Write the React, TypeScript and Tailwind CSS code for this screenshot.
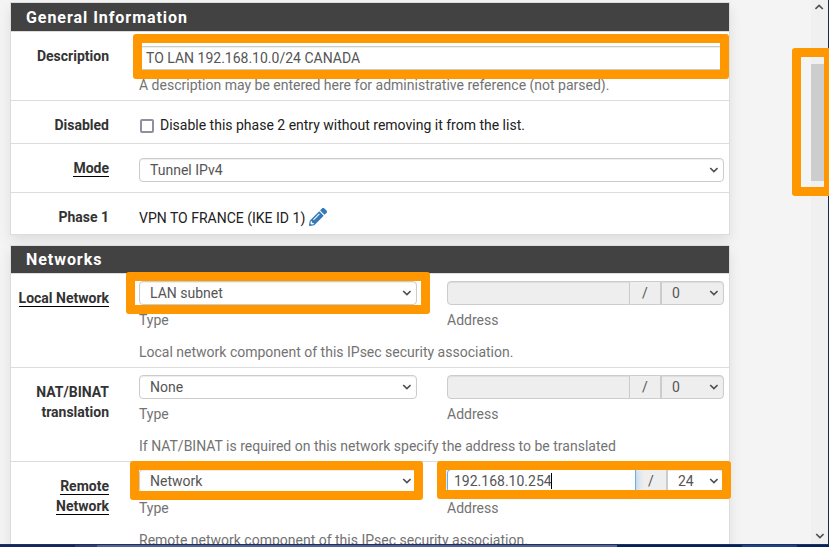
import type { ReactNode } from "react";

function Chevron({ up = false }: { up?: boolean }) {
  return (
    <svg width="9" height="6" viewBox="0 0 9 6" className={up ? "rotate-180" : ""} fill="none" stroke="#505055" strokeWidth="1.7">
      <path d="M1.2 1 L4.9 4.6 L8.6 1" />
    </svg>
  );
}

function Panel({ title, headClass, children }: { title: string; headClass: string; children: ReactNode }) {
  return (
    <section className="w-[720px] border border-[#dcdcdc] bg-white shadow-[0_6px_12px_rgba(0,0,0,0.09)]">
      <h2 className={`flex items-center border-b border-[#dcdcdc] bg-[#424242] bg-clip-padding pl-[15px] text-[16px] font-bold tracking-[0.95px] text-white ${headClass}`}>
        {title}
      </h2>
      {children}
    </section>
  );
}

function Row({ label, underline = false, labelClass, className, children }: { label: string[]; underline?: boolean; labelClass: string; className: string; children: ReactNode }) {
  return (
    <div className={`flex gap-[30px] pr-[5px] ${className}`}>
      <div className={`flex w-[98px] shrink-0 flex-col items-end font-bold text-[#333] ${labelClass}`}>
        {label.map((line) => (
          <span key={line} className="flex h-5 items-start whitespace-nowrap leading-5">
            <span className={underline ? "h-[19px] border-b border-black" : ""}>{line}</span>
          </span>
        ))}
      </div>
      <div className="min-w-0 flex-1">{children}</div>
    </div>
  );
}

function Select({ value, className = "" }: { value: string; className?: string }) {
  return (
    <div className={`flex h-6 items-center justify-between rounded border border-[#ccc] pr-[5px] pl-[10px] text-[#555] shadow-[inset_0_1px_1px_rgba(0,0,0,0.075)] ${className}`}>
      <span>{value}</span>
      <Chevron />
    </div>
  );
}

function Network({ type, note, address = "", mask, active = false }: { type: string; note: string; address?: string; mask: string; active?: boolean }) {
  return (
    <>
      <div className="flex gap-[30px]">
        <div className="w-[278px]">
          <Select value={type} />
          <div className="mt-[5px] leading-5 text-[#737373]">Type</div>
        </div>
        <div className="w-[277px]">
          <div className="flex h-6 text-[#555]">
            <div className={`flex items-center rounded-l border pl-[6px] ${active ? "z-10 w-[189px] border-[#66afe9] bg-white shadow-[0_0_8px_rgba(102,175,233,0.6)]" : "w-[183px] border-[#ccc] bg-[#eee] shadow-[inset_0_1px_1px_rgba(0,0,0,0.075)]"}`}>
              <span>{address}</span>
              {active && <span className="-ml-px h-4 w-px bg-black" />}
            </div>
            <div className="flex w-[31px] items-center justify-center border-y border-r border-[#ccc] bg-[#eee]">/</div>
            <Select value={mask} className={`flex-1 rounded-l-none ${active ? "bg-white" : "bg-[#eee]"}`} />
          </div>
          <div className="mt-[5px] leading-5 text-[#737373]">Address</div>
        </div>
      </div>
      <div className="mt-3 leading-5 text-[#737373]">{note}</div>
    </>
  );
}

function Highlight({ className }: { className: string }) {
  return <div className={`absolute z-20 rounded-[3px] border-[9px] border-[#ff9800] ${className}`} />;
}

export default function App() {
  return (
    <div className="relative flex h-[547px] w-[829px] flex-col overflow-hidden bg-[#f4f4f4] font-['Roboto','Liberation_Sans',sans-serif] text-[14px] text-[#212121]">
      <div className="flex h-[544px] overflow-hidden">
        <main className="flex w-[811px] shrink-0 flex-col gap-[10px] pt-[2px] pl-[10px]">
          <Panel title="General Information" headClass="h-[29px] pt-[2px]">
            <Row label={["Description"]} labelClass="pt-[14px]" className="h-[69px] border-b border-[#dcdcdc]">
              <div className="mt-[14px] flex h-6 items-center rounded border border-[#ccc] pl-[6px] text-[#555] shadow-[inset_0_1px_1px_rgba(0,0,0,0.075)]">TO LAN 192.168.10.0/24 CANADA</div>
              <div className="mt-[5px] leading-5 text-[#737373]">A description may be entered here for administrative reference (not parsed).</div>
            </Row>
            <Row label={["Disabled"]} labelClass="pt-[14px]" className="h-[43px] border-b border-[#dcdcdc]">
              <div className="mt-[14px] flex items-center gap-[6px] pl-px leading-5">
                <span className="mt-px size-[14px] rounded-[2px] border-2 border-[#8f8f9d] bg-white" />
                <span>Disable this phase 2 entry without removing it from the list.</span>
              </div>
            </Row>
            <Row label={["Mode"]} underline labelClass="pt-[14px]" className="h-[49px] border-b border-[#dcdcdc]">
              <Select value="Tunnel IPv4" className="mt-[14px]" />
            </Row>
            <Row label={["Phase 1"]} labelClass="pt-[14px]" className="h-[41px]">
              <div className="mt-[15px] flex h-5 items-center gap-1 leading-5">
                <span>VPN TO FRANCE (IKE ID 1)</span>
                <svg width="18" height="18" viewBox="0 0 512 512" fill="#337ab7" className="-mt-[3px]">
                  <path d="M497.9 142.1l-46.1 46.1c-4.7 4.7-12.3 4.7-17 0l-111-111c-4.7-4.7-4.7-12.3 0-17l46.1-46.1c18.7-18.7 49.1-18.7 67.9 0l60.1 60.1c18.8 18.7 18.8 49.1 0 67.9zM284.2 99.8L21.6 362.4.4 483.9c-2.9 16.4 11.4 30.6 27.8 27.8l121.5-21.3 262.6-262.6c4.7-4.7 4.7-12.3 0-17l-111-111c-4.8-4.7-12.4-4.7-17.1 0zM124.1 339.9c-5.5-5.5-5.5-14.3 0-19.8l154-154c5.5-5.5 14.3-5.5 19.8 0s5.5 14.3 0 19.8l-154 154c-5.5 5.5-14.3 5.5-19.8 0zM88 424h48v36.3l-64.5 11.3-31.1-31.1L51.7 376H88v48z" />
                </svg>
              </div>
            </Row>
          </Panel>
          <Panel title="Networks" headClass="h-[28px]">
            <Row label={["Local Network"]} underline labelClass="pt-[14px]" className="h-[94px] border-b border-[#dcdcdc] pt-[7px] [&>div:first-child]:-mt-[7px]">
              <Network type="LAN subnet" mask="0" note="Local network component of this IPsec security association." />
            </Row>
            <Row label={["NAT/BINAT", "translation"]} labelClass="pt-[14px]" className="h-[94px] border-b border-[#dcdcdc] pt-[7px] [&>div:first-child]:-mt-[7px]">
              <Network type="None" mask="0" note="If NAT/BINAT is required on this network specify the address to be translated" />
            </Row>
            <Row label={["Remote", "Network"]} underline labelClass="pt-[14px]" className="h-[94px] pt-[7px] [&>div:first-child]:-mt-[7px]">
              <Network type="Network" address="192.168.10.254" mask="24" active note="Remote network component of this IPsec security association." />
            </Row>
          </Panel>
        </main>
        <aside className="flex w-[17px] flex-col items-center bg-[#f0f0f0] pt-1 pb-[5px]">
          <Chevron up />
          <div className="mt-[54px] h-[117px] w-full bg-[#cdcdcd]" />
          <div className="mt-auto"><Chevron /></div>
        </aside>
        <div className="w-px bg-[#18294d]" />
      </div>
      <div className="flex h-[3px] border-t border-[#26304c]">
        <div className="w-[75px] bg-[#102869]" />
        <div className="w-[22px] bg-[#293c83]" />
        <div className="w-[520px] bg-[#5062a0]" />
        <div className="w-[125px] bg-[#002367]" />
        <div className="w-[55px] bg-[#164293]" />
        <div className="flex-1 bg-[#002367]" />
      </div>
      <Highlight className="top-[34px] left-[133px] h-[45px] w-[596px]" />
      <Highlight className="top-[272px] left-[126px] h-[42px] w-[304px]" />
      <Highlight className="top-[461px] left-[130px] h-[39px] w-[293px]" />
      <Highlight className="top-[461px] left-[437px] h-[38px] w-[294px]" />
      <Highlight className="top-[48px] left-[792px] h-[148px] w-[41px]" />
    </div>
  );
}
